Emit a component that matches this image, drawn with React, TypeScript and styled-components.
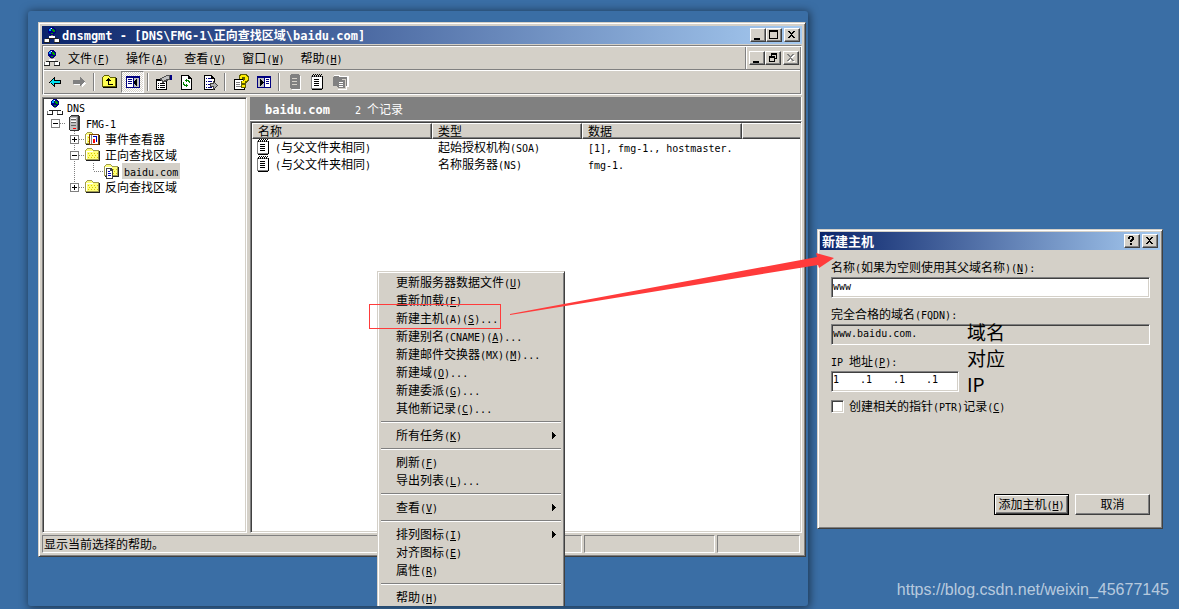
import React from "react";
import styled, { createGlobalStyle, css } from "styled-components";

const face = "#d4d0c8";
const shade = "#808080";
const dark = "#404040";
const desktop = "#3a6ea5";
const red = "#ff3b3b";

const Global = createGlobalStyle`
  * { box-sizing: border-box; }
  body {
    margin: 0;
    background: ${desktop};
    color: #000;
    font: 12px/16px "Noto Sans CJK SC", sans-serif;
  }
  button, input { font: inherit; color: inherit; margin: 0; padding: 0; border-radius: 0; }
`;

/* ---------- bevels ---------- */

const windowEdge = css`
  border: 1px solid;
  border-color: ${face} ${dark} ${dark} ${face};
  box-shadow: inset 1px 1px 0 #fff, inset -1px -1px 0 ${shade};
`;
const raised = css`
  border: 1px solid;
  border-color: #fff ${dark} ${dark} #fff;
  box-shadow: inset -1px -1px 0 ${shade};
`;
const sunken = css`
  border: 1px solid;
  border-color: ${shade} #fff #fff ${shade};
  box-shadow: inset 1px 1px 0 ${dark}, inset -1px -1px 0 ${face};
`;
const thinSunken = css`
  border: 1px solid;
  border-color: ${shade} #fff #fff ${shade};
`;

/* ---------- text ---------- */

const Latin = styled.span<{ $bold?: boolean }>`
  font-family: "DejaVu Sans Mono", monospace;
  font-size: ${(p) => (p.$bold ? 12 : 10)}px;
  line-height: 10px;
  white-space: pre;
`;

/** Half-width runs are set in a monospace face; "&" marks the access key. */
function Text({ children, bold }: { children: string; bold?: boolean }) {
  return (
    <>
      {children.split(/([\x20-\x7e]+)/).map((run, i) => {
        if (i % 2 === 0) return run;
        const at = run.indexOf("&");
        return (
          <Latin key={i} $bold={bold}>
            {at < 0 ? run : <>{run.slice(0, at)}<u>{run[at + 1]}</u>{run.slice(at + 2)}</>}
          </Latin>
        );
      })}
    </>
  );
}

/* ---------- icons ---------- */

const Svg = styled.svg`
  display: block;
  flex: none;
`;

type IconProps = { w?: number; h?: number; children: React.ReactNode };
const Icon = ({ w = 16, h = 16, children }: IconProps) => (
  <Svg width={w} height={h} viewBox={`0 0 ${w} ${h}`} shapeRendering="crispEdges" aria-hidden="true">
    {children}
  </Svg>
);

const NetIcon = () => (
  <Icon>
    <path d="M6 0h4v1h1v1h1v4h-1v1h-1v1H6V7H5V6H4V2h1V1h1z" fill="#000080" />
    <path d="M6 1h2v1H7v2H5V2h1z" fill="#00a0ff" />
    <path d="M8 2h2v1h1v2h-2V4H8zM7 6h2v1H7z" fill="#00a000" />
    <path d="M7 1h1v1H7z" fill="#fff" />
    <path d="M7 8h2v1h2v2H5V9h2zM0 12h6v4H0zM10 12h6v4h-6z" fill="#808080" />
    <path d="M5 9h6v2H5zM1 12h4v3H1zM11 12h4v3h-4z" fill="#fff" />
    <path d="M4 11h8v1H4zM2 11h2v1H2zM12 11h2v1h-2zM0 15h6v1H0zM10 15h6v1h-6zM5 12h1v3H5zM15 12h1v3h-1z" fill="#202020" />
  </Icon>
);

const ServerIcon = ({ off }: { off?: boolean }) => (
  <Icon>
    {off && <path d="M4 1h9v1h1v14H5v-1H4z" fill="#fff" />}
    <path d={off ? "M4 0h8v1h1v14H4v-1H3V1h1z" : "M5 0h8v1h1v14h-1v1H4v-1H3V2h1V1h1z"} fill={off ? shade : "#303030"} />
    {!off && <path d="M4 2h7v13H4z" fill="#c0c0c0" />}
    {!off && <path d="M5 1h7v1H5zM11 2h1v13h-1z" fill="#808080" />}
    <path d="M5 4h5v1H5zM5 7h5v1H5zM5 10h5v1H5z" fill={off ? face : "#606060"} />
    {!off && <path d="M5 3h5v1H5zM5 6h5v1H5z" fill="#fff" />}
    {!off && <path d="M7 13h3v1H7z" fill="#f00" />}
  </Icon>
);

const Folder = () => (
  <>
    <path d="M0 3h1V2h1V1h5v1h1v1h6v10H0z" fill="#a09c50" />
    <path d="M1 3h1V2h5v1h1v1h5v8H1z" fill="#ffff7a" />
    <path d="M1 4h7v1H1zM1 4h1v8H1z" fill="#fff" />
    <path d="M3 6h1v1H3zM6 6h1v1H6zM9 6h1v1H9zM4 8h1v1H4zM7 8h1v1H7zM10 8h1v1h-1zM3 10h1v1H3zM6 10h1v1H6zM9 10h1v1H9zM12 6h1v1h-1zM12 10h1v1h-1z" fill="#d8c800" />
    <path d="M14 4h1v10H1v-1h13z" fill="#202020" />
  </>
);
const FolderIcon = () => <Icon><Folder /></Icon>;

const EventIcon = () => (
  <Icon>
    <Folder />
    <path d="M4 3h10v11H4z" fill="#804000" />
    <path d="M5 4h8v9H5z" fill="#fff" />
    <path d="M6 4h1v9H6z" fill="#808080" />
    <path d="M8 5h4v1H8zM11 5h1v6h-1z" fill="#0000c0" />
    <path d="M8 8h2v4H8z" fill="#f00" />
  </Icon>
);

const ZoneIcon = () => (
  <Icon>
    <Folder />
    <path d="M2 5h5l2 2v9H2z" fill="#404040" />
    <path d="M3 6h3v2h2v7H3z" fill="#fff" />
    <path d="M4 8h2v1H4zM4 10h3v1H4zM4 12h3v1H4z" fill="#0000c0" />
  </Icon>
);

const ZonesOffIcon = () => (
  <Icon>
    <path d="M1 1h6v1h9v11h-2v3H5z" fill="#fff" />
    <path d="M0 3h1V2h5v1h8v9H0z" fill={shade} />
    <path d="M4 5h9v10H4z" fill={face} />
    <path d="M4 5h5v1h3v8H5v-1H4z" fill={shade} />
    <path d="M6 8h4v1H6zM6 10h4v1H6zM6 12h4v1H6z" fill="#fff" />
  </Icon>
);

const RecordIcon = () => (
  <Icon>
    <path d="M1 2h11v13H1z" fill="#808080" />
    <path d="M2 3h10v11H2z" fill="#fff" />
    <path d="M12 2h1v13h-1v1H2v-1h10z" fill="#000" />
    <path d="M2 1h1v2H2zM4 1h1v2H4zM6 1h1v2H6zM8 1h1v2H8zM10 1h1v2h-1zM3 0h1v1H3zM5 0h1v1H5zM7 0h1v1H7zM9 0h1v1H9zM11 0h1v1h-1zM4 5h5v1H4zM4 7h5v1H4zM4 9h5v1H4zM4 11h5v1H4z" fill="#000" />
  </Icon>
);

const ArrowIcon = ({ back }: { back?: boolean }) =>
  back ? (
    <Icon>
      <path d="M1 8h1V7h1V6h1V5h1V4h1V3h1v3h6v4H7v3H6v-1H5v-1H4v-1H3V9H1z" fill="#000" />
      <path d="M2 8h1V7h1V6h1V5h1v2h6v2H6v2H5v-1H4V9H2z" fill="#00e0f0" />
    </Icon>
  ) : (
    <Icon>
      <path d="M3 8h11v1h1v1h-1v1h-1v1h-1v1h-1v-2H3z" fill="#fff" />
      <path d="M2 6h7V3h1v1h1v1h1v1h1v1h1v1h-1v1h-1v1h-1v1h-1v1H9v-2H2z" fill={shade} />
    </Icon>
  );

const UpIcon = () => (
  <Icon>
    <path d="M0 3h1V2h1V1h5v1h1v1h6v10H0z" fill="#606000" />
    <path d="M1 3h1V2h5v1h1v1h5v8H1z" fill="#ffff50" />
    <path d="M6 4h1v1h1v1h1v1H7v3h4v1H6V7H4V6h1V5h1z" fill="#000" />
    <path d="M14 4h1v10H1v-1h13z" fill="#000" />
  </Icon>
);

const PaneIcon = ({ flip }: { flip?: boolean }) => (
  <Icon>
    <path d="M1 2h14v12H1z" fill="#000080" />
    <path d="M2 4h6v9H2zM9 4h5v9H9z" fill="#fff" />
    <path d={flip ? "M10 5h3v1h-3zM10 7h3v1h-3zM10 9h3v1h-3z" : "M3 5h4v1H3zM3 7h4v1H3zM3 9h4v1H3z"} fill="#000080" />
    <path d={flip ? "M2 4h6v9H2z" : "M9 4h5v9H9z"} fill="#c0c0c0" />
    <path d={flip ? "M4 5h1v1h1v1h1v1h1v1H7v1H6v1H5v1H4z" : "M12 5v7h-1v-1h-1v-1H9V7h1V6h1V5z"} fill="#000" />
  </Icon>
);

const PropsIcon = () => (
  <Icon w={18}>
    <path d="M1 5h11v11H1z" fill="#000" />
    <path d="M2 7h9v8H2z" fill="#fff" />
    <path d="M3 9h1v1H3zM5 9h5v1H5zM3 11h1v1H3zM5 11h5v1H5zM3 13h1v1H3zM5 13h5v1H5z" fill="#000" />
    <path d="M5 4h2V3h2V2h2V1h5v5h-3v1h-2v1H9v1H7V7H6V6H5z" fill="#505050" />
    <path d="M7 4h2V3h2V2h3v3h-3v1H9v1H8V6H7z" fill="#c0c0c0" />
    <path d="M15 1h2v5h-2z" fill="#000080" />
  </Icon>
);

const Sheet = () => (
  <>
    <path d="M2 1h8v1h1v1h1v1h1v12H2z" fill="#000" />
    <path d="M3 2h6v3h3v10H3z" fill="#fff" />
  </>
);

const RefreshIcon = () => (
  <Icon>
    <Sheet />
    <path d="M7 5h1v1h2v1h1v2h-1V8H9V7H8v1H7V7H6V6h1zM4 8h1v2h1v1h1v-1h1v1h1v1H8v1H7v-1H5v-1H4z" fill="#008000" />
  </Icon>
);

const ExportIcon = () => (
  <Icon>
    <Sheet />
    <path d="M4 4h1v1H4zM6 4h3v1H6zM4 7h1v1H4zM6 7h4v1H6zM4 10h1v1H4zM6 10h3v1H6zM4 13h1v1H4zM6 13h4v1H6z" fill="#000080" />
    <path d="M8 9h3V7h1v1h1v1h1v1h1v1h1v1h-1v1h-1v1h-1v1h-1v1h-1v-3H8z" fill="#404040" />
    <path d="M9 10h3V9h1v1h1v1h1v1h-1v1h-1v1h-1v-2H9z" fill="#b0b0b0" />
  </Icon>
);

const HelpIcon = () => (
  <Icon>
    <path d="M1 5h11v11H1z" fill="#000" />
    <path d="M2 6h9v9H2z" fill="#fff" />
    <path d="M3 8h4v1H3zM3 10h4v1H3zM3 12h6v1H3z" fill="#808080" />
    <path d="M7 0h7v1h1v1h1v5h-1v1h-1v1h-1v5H8V7h2V5H6V1h1z" fill="#606000" />
    <path d="M8 1h5v1h1v1h1v3h-1v1h-2v2H9V7h2V6h1V3H9v2H7V2h1zM9 11h3v2H9z" fill="#ffee00" />
  </Icon>
);

const glyphs: Record<string, string> = {
  min: "M3 9h6v2H3z",
  max: "M2 1h9v9H2zM3 3v6h7V3z",
  restore: "M5 1h6v6H9V6h1V3H6v1H5zM3 4h6v6H3zM4 6v3h4V6z",
  close: "M3 2h2v1h1v1h1V3h1V2h2v1H9v1H8v1H7v1h1v1h1v1h1v1H8V8H7V7H6v1H5v1H3V8h1V7h1V6h1V5H5V4H4V3H3z",
  help: "M4 1h4v1h1v3H8v1H7v1H5V5h1V4h1V2H5v2H3V2h1zM5 8h2v2H5z",
};
const Glyph = ({ name, off }: { name: string; off?: boolean }) => (
  <Icon w={13} h={12}>
    {off && <path d={glyphs[name]} fill="#fff" fillRule="evenodd" transform="translate(1 1)" />}
    <path d={glyphs[name]} fill={off ? shade : "#000"} fillRule="evenodd" />
  </Icon>
);

/* ---------- desktop ---------- */

const Desktop = styled.main`
  position: relative;
  display: grid;
  grid-template-columns: minmax(0, 1fr) 346px;
  column-gap: 9px;
  min-height: 100vh;
  padding: 11px 16px 3px 28px;
  overflow: hidden;
`;

const Screen = styled.div`
  position: relative;
  display: flex;
  padding: 11px 2px 49px 10px;
  border-radius: 3px;
  overflow: hidden;
`;

const ScreenFrame = styled.div`
  display: grid;
  border-radius: 3px;
  box-shadow: 1px 1px 8px 1px rgba(0, 0, 0, 0.5);
`;

const ConsoleWindow = styled.section`
  ${windowEdge}
  flex: 1;
  min-width: 0;
  display: flex;
  flex-direction: column;
  padding: 3px;
  background: ${face};
`;

const TitleBar = styled.header`
  flex: none;
  display: flex;
  align-items: center;
  height: 18px;
  padding: 0 2px;
  background: linear-gradient(90deg, #0a246a, #a6caf0);
  color: #fff;
`;

const Title = styled.h1<{ $inset?: boolean }>`
  flex: 1;
  margin: 0;
  padding: 0 0 1px ${(p) => (p.$inset ? 2 : 0)}px;
  font-size: ${(p) => (p.$inset ? 12 : 13)}px;
  line-height: 16px;
  font-weight: 700;
  white-space: nowrap;
`;

const CaptionGroup = styled.div`
  display: flex;
`;

const CaptionButton = styled.button<{ $apart?: boolean }>`
  ${raised}
  width: 16px;
  height: 14px;
  margin-left: ${(p) => (p.$apart ? 2 : 0)}px;
  background: ${face};
`;

function Caption({ first, offClose }: { first: string[]; offClose?: boolean }) {
  return (
    <CaptionGroup>
      {first.map((name) => (
        <CaptionButton key={name} type="button" aria-label={name}><Glyph name={name} /></CaptionButton>
      ))}
      <CaptionButton $apart type="button" aria-label="close" disabled={offClose}>
        <Glyph name="close" off={offClose} />
      </CaptionButton>
    </CaptionGroup>
  );
}

const Rebar = styled.div`
  flex: none;
  margin-top: 1px;
  padding: 1px;
  border: 1px solid;
  border-color: ${shade} #fff #fff ${shade};
  box-shadow: inset 1px 1px 0 #fff, inset -1px -1px 0 ${shade};
`;

const MenuBar = styled.nav`
  display: flex;
  align-items: center;
  height: 22px;
`;

const MenuTitle = styled.button`
  height: 20px;
  padding: 0 8px;
  border: 0;
  background: none;
  line-height: 18px;
  white-space: nowrap;
`;

const MdiControls = styled.div`
  display: flex;
  align-items: center;
  height: 22px;
  margin-left: auto;
  padding: 0 1px 0 3px;
  border-left: 1px solid ${shade};
  box-shadow: inset 1px 0 0 #fff;
`;

const ToolBar = styled.div`
  display: flex;
  height: 24px;
  border-top: 1px solid ${shade};
  box-shadow: inset 0 1px 0 #fff;
  padding-top: 1px;
`;

const Tool = styled.button<{ $down?: boolean }>`
  display: grid;
  place-items: center;
  width: 23px;
  height: 22px;
  border: 0;
  background: none;
  ${(p) => p.$down && css`
    ${thinSunken}
    background: repeating-conic-gradient(#fff 0 25%, ${face} 0 50%) 0 0 / 2px 2px;
  `}
`;

const ToolGap = styled.span`
  width: 2px;
  height: 18px;
  margin: 2px 3px;
  border-left: 1px solid ${shade};
  border-right: 1px solid #fff;
`;

const Panes = styled.div`
  flex: 1;
  display: grid;
  grid-template-columns: 205px minmax(0, 1fr);
  column-gap: 3px;
  margin: 2px 0;
`;

const TreePane = styled.div`
  ${sunken}
  padding: 1px 3px;
  background: #fff;
`;

const TreeRow = styled.div`
  display: flex;
  align-items: center;
  height: 16px;
`;

const Guide = styled.span<{ $line?: boolean; $end?: boolean; $link?: boolean }>`
  position: relative;
  flex: none;
  display: grid;
  place-items: center;
  width: 19px;
  height: 16px;
  ${(p) => p.$line && css`
    background: repeating-linear-gradient(${shade} 0 1px, transparent 1px 2px) 9px 0 / 1px ${p.$end ? 8 : 16}px no-repeat;
  `}
  ${(p) => p.$link && css`
    &::after {
      content: "";
      position: absolute;
      left: 10px;
      right: 0;
      top: 8px;
      height: 1px;
      background: repeating-linear-gradient(90deg, ${shade} 0 1px, transparent 1px 2px);
    }
  `}
`;

const TreeIcon = styled.span`
  flex: none;
  margin: 0 2px 0 1px;
`;

const TreeLabel = styled.span<{ $selected?: boolean }>`
  padding: 0 2px;
  line-height: 16px;
  white-space: nowrap;
  background: ${(p) => (p.$selected ? face : "transparent")};
`;

const ExpanderBox = styled(Svg)`
  z-index: 1;
`;

const Expander = ({ open }: { open: boolean }) => (
  <ExpanderBox width="9" height="9" viewBox="0 0 9 9" shapeRendering="crispEdges" aria-hidden="true">
    <path d="M0 0h9v9H0z" fill={shade} />
    <path d="M1 1h7v7H1z" fill="#fff" />
    <path d={open ? "M2 4h5v1H2z" : "M2 4h5v1H2zM4 2h1v5H4z"} fill="#000" />
  </ExpanderBox>
);

const ListColumn = styled.div`
  display: flex;
  flex-direction: column;
  min-width: 0;
`;

const Banner = styled.div`
  flex: none;
  display: flex;
  align-items: center;
  gap: 25px;
  height: 24px;
  padding-left: 15px;
  border: solid #fff;
  border-width: 0 1px 1px 0;
  background: ${shade};
  color: #fff;
`;

const ListPane = styled.div`
  ${sunken}
  flex: 1;
  padding: 1px;
  background: #fff;
`;

const RecordTable = styled.table`
  width: 100%;
  table-layout: fixed;
  border-collapse: separate;
  border-spacing: 0;
  th {
    ${raised}
    height: 16px;
    padding: 0 5px;
    background: ${face};
    font-weight: 400;
    line-height: 14px;
    text-align: left;
  }
  th:last-child { border-right: 0; box-shadow: inset 0 -1px 0 ${shade}; }
  td {
    height: 17px;
    padding: 0 6px 1px;
    line-height: 16px;
    vertical-align: top;
    white-space: nowrap;
  }
`;

const NameCell = styled.span`
  display: flex;
  align-items: center;
  gap: 3px;
  margin-left: -2px;
`;

const StatusBar = styled.footer`
  flex: none;
  display: grid;
  grid-template-columns: minmax(0, 1fr) 131px 83px;
  gap: 2px;
  height: 18px;
  padding-right: 2px;
`;

const StatusCell = styled.div`
  ${thinSunken}
  padding-left: 1px;
  line-height: 16px;
  white-space: nowrap;
`;

/* ---------- context menu ---------- */

const ContextMenu = styled.div`
  ${windowEdge}
  position: absolute;
  left: 349px;
  top: 260px;
  width: 188px;
  padding: 2px;
  background: ${face};
`;

const MenuItem = styled.button`
  display: flex;
  align-items: center;
  justify-content: space-between;
  width: 100%;
  height: 18px;
  padding: 0 6px 2px 16px;
  border: 0;
  background: none;
  line-height: 16px;
  text-align: left;
  white-space: nowrap;
`;

const Divider = styled.hr`
  height: 2px;
  margin: 3px 1px 4px;
  border: 0;
  border-top: 1px solid ${shade};
  border-bottom: 1px solid #fff;
`;

const Highlight = styled.div`
  position: absolute;
  left: 341px;
  top: 293px;
  width: 132px;
  height: 25px;
  border: 1px solid ${red};
`;

const menuItems: (string | null)[] = [
  "更新服务器数据文件(&U)",
  "重新加载(&E)",
  "新建主机(A)(&S)...",
  "新建别名(CNAME)(&A)...",
  "新建邮件交换器(MX)(&M)...",
  "新建域(&O)...",
  "新建委派(&G)...",
  "其他新记录(&C)...",
  null,
  "所有任务(&K)>",
  null,
  "刷新(&F)",
  "导出列表(&L)...",
  null,
  "查看(&V)>",
  null,
  "排列图标(&I)>",
  "对齐图标(&E)",
  "属性(&R)",
  null,
  "帮助(&H)",
];

/* ---------- dialog ---------- */

const Dialog = styled.section`
  ${windowEdge}
  position: relative;
  align-self: start;
  display: flex;
  flex-direction: column;
  min-height: 300px;
  margin-top: 218px;
  padding: 2px;
  background: ${face};
`;

const Form = styled.form`
  flex: 1;
  display: flex;
  flex-direction: column;
  gap: 8px;
  padding: 9px 10px 11px 11px;
`;

const Field = styled.div`
  display: flex;
  flex-direction: column;
  gap: 2px;
`;

const TextBox = styled.input`
  ${sunken}
  width: 100%;
  height: 21px;
  padding: 0 1px 2px;
  background: #fff;
  font: 10px "DejaVu Sans Mono", monospace;
  &:read-only { background: ${face}; }
`;

const AddressBox = styled.div`
  ${sunken}
  display: flex;
  width: 128px;
  height: 21px;
  padding: 0 1px 3px;
  background: #fff;
  font: 10px/16px "DejaVu Sans Mono", monospace;
`;

const Octet = styled.input`
  width: 27px;
  height: 16px;
  border: 0;
  background: none;
  outline: 0;
`;

const Dot = styled.span`
  width: 6px;
`;

const CheckRow = styled.div`
  display: flex;
  gap: 5px;
  line-height: 12px;
`;

const CheckBox = styled.input`
  ${sunken}
  appearance: none;
  width: 13px;
  height: 13px;
  background: #fff;
`;

const Actions = styled.div`
  display: flex;
  justify-content: flex-end;
  gap: 6px;
  margin-top: auto;
`;

const PushButton = styled.button<{ $default?: boolean }>`
  ${raised}
  width: 75px;
  height: 21px;
  padding-bottom: 2px;
  background: ${face};
  line-height: 16px;
  white-space: nowrap;
  ${(p) => p.$default && css`
    border-color: #000;
    box-shadow: inset 1px 1px 0 #fff, inset -1px -1px 0 ${dark}, inset -2px -2px 0 ${shade};
  `}
`;

const Note = styled.p`
  position: absolute;
  left: 149px;
  top: 89px;
  margin: 0;
  font-size: 19px;
  line-height: 26px;
`;

const Pointer = styled.svg`
  position: absolute;
  left: 509px;
  top: 252px;
  pointer-events: none;
`;

const Watermark = styled.a`
  position: absolute;
  right: 10px;
  bottom: 9px;
  color: rgba(255, 255, 255, 0.65);
  font: 16px/20px "Liberation Sans", sans-serif;
  text-decoration: none;
`;

export default function App() {
  return (
    <Desktop>
      <Global />
      <ScreenFrame>
        <Screen>
          <ConsoleWindow>
            <TitleBar>
              <NetIcon />
              <Title $inset><Text bold>{"dnsmgmt - [DNS\\FMG-1\\正向查找区域\\baidu.com]"}</Text></Title>
              <Caption first={["min", "max"]} />
            </TitleBar>
            <Rebar>
              <MenuBar>
                <NetIcon />
                {["文件(&F)", "操作(&A)", "查看(&V)", "窗口(&W)", "帮助(&H)"].map((m) => (
                  <MenuTitle key={m} type="button"><Text>{m}</Text></MenuTitle>
                ))}
                <MdiControls><Caption first={["min", "restore"]} offClose /></MdiControls>
              </MenuBar>
              <ToolBar>
                <Tool type="button" aria-label="后退"><ArrowIcon back /></Tool>
                <Tool type="button" aria-label="前进"><ArrowIcon /></Tool>
                <ToolGap />
                <Tool type="button" aria-label="上一级"><UpIcon /></Tool>
                <Tool type="button" aria-label="控制台树" $down><PaneIcon /></Tool>
                <ToolGap />
                <Tool type="button" aria-label="属性"><PropsIcon /></Tool>
                <Tool type="button" aria-label="刷新"><RefreshIcon /></Tool>
                <Tool type="button" aria-label="导出列表"><ExportIcon /></Tool>
                <ToolGap />
                <Tool type="button" aria-label="帮助"><HelpIcon /></Tool>
                <Tool type="button" aria-label="操作窗格"><PaneIcon flip /></Tool>
                <ToolGap />
                <Tool type="button" aria-label="新建服务器"><ServerIcon off /></Tool>
                <Tool type="button" aria-label="新建记录"><RecordIcon /></Tool>
                <Tool type="button" aria-label="新建区域"><ZonesOffIcon /></Tool>
              </ToolBar>
            </Rebar>
            <Panes>
              <TreePane>
                <TreeRow><TreeIcon><NetIcon /></TreeIcon><TreeLabel><Text>DNS</Text></TreeLabel></TreeRow>
                <TreeRow>
                  <Guide $link><Expander open /></Guide>
                  <TreeIcon><ServerIcon /></TreeIcon><TreeLabel><Text>FMG-1</Text></TreeLabel>
                </TreeRow>
                <TreeRow>
                  <Guide /><Guide $line $link><Expander open={false} /></Guide>
                  <TreeIcon><EventIcon /></TreeIcon><TreeLabel>事件查看器</TreeLabel>
                </TreeRow>
                <TreeRow>
                  <Guide /><Guide $line $link><Expander open /></Guide>
                  <TreeIcon><FolderIcon /></TreeIcon><TreeLabel>正向查找区域</TreeLabel>
                </TreeRow>
                <TreeRow>
                  <Guide /><Guide $line /><Guide $line $end $link />
                  <TreeIcon><ZoneIcon /></TreeIcon><TreeLabel $selected><Text>baidu.com</Text></TreeLabel>
                </TreeRow>
                <TreeRow>
                  <Guide /><Guide $line $end $link><Expander open={false} /></Guide>
                  <TreeIcon><FolderIcon /></TreeIcon><TreeLabel>反向查找区域</TreeLabel>
                </TreeRow>
              </TreePane>
              <ListColumn>
                <Banner>
                  <strong><Text bold>baidu.com</Text></strong>
                  <span><Text>2 个记录</Text></span>
                </Banner>
                <ListPane>
                  <RecordTable>
                    <colgroup>
                      <col width="180" /><col width="150" /><col width="160" /><col />
                    </colgroup>
                    <thead>
                      <tr><th>名称</th><th>类型</th><th>数据</th><th aria-label="其他" /></tr>
                    </thead>
                    <tbody>
                      <tr>
                        <td><NameCell><RecordIcon /><span><Text>(与父文件夹相同)</Text></span></NameCell></td>
                        <td><Text>起始授权机构(SOA)</Text></td>
                        <td><Text>[1], fmg-1., hostmaster.</Text></td>
                        <td />
                      </tr>
                      <tr>
                        <td><NameCell><RecordIcon /><span><Text>(与父文件夹相同)</Text></span></NameCell></td>
                        <td><Text>名称服务器(NS)</Text></td>
                        <td><Text>fmg-1.</Text></td>
                        <td />
                      </tr>
                    </tbody>
                  </RecordTable>
                </ListPane>
              </ListColumn>
            </Panes>
            <StatusBar>
              <StatusCell>显示当前选择的帮助。</StatusCell>
              <StatusCell />
              <StatusCell />
            </StatusBar>
          </ConsoleWindow>

          <ContextMenu>
            {menuItems.map((item, i) =>
              item === null ? (
                <Divider key={i} />
              ) : (
                <MenuItem key={i} type="button">
                  <span><Text>{item.replace(">", "")}</Text></span>
                  {item.endsWith(">") && (
                    <Icon w={4} h={9}><path d="M0 1h1v1h1v1h1v1h1v1H3v1H2v1H1v1H0z" fill="#000" /></Icon>
                  )}
                </MenuItem>
              )
            )}
          </ContextMenu>
          <Highlight />
        </Screen>
      </ScreenFrame>

      <Dialog>
        <TitleBar>
          <Title as="h2">新建主机</Title>
          <Caption first={["help"]} />
        </TitleBar>
        <Form onSubmit={(e) => e.preventDefault()}>
          <Field>
            <label htmlFor="host"><Text>名称(如果为空则使用其父域名称)(&N):</Text></label>
            <TextBox id="host" defaultValue="www" />
          </Field>
          <Field>
            <label htmlFor="fqdn"><Text>完全合格的域名(FQDN):</Text></label>
            <TextBox id="fqdn" readOnly value="www.baidu.com." />
          </Field>
          <Field>
            <label htmlFor="ip0"><Text>IP 地址(&P):</Text></label>
            <AddressBox>
              {[0, 1, 2, 3].map((n) => (
                <React.Fragment key={n}>
                  {n > 0 && <Dot>.</Dot>}
                  <Octet id={`ip${n}`} aria-label={`IP 地址 ${n + 1}`} defaultValue="1" />
                </React.Fragment>
              ))}
            </AddressBox>
          </Field>
          <CheckRow>
            <CheckBox id="ptr" type="checkbox" />
            <label htmlFor="ptr"><Text>创建相关的指针(PTR)记录(&C)</Text></label>
          </CheckRow>
          <Actions>
            <PushButton $default type="submit"><Text>添加主机(&H)</Text></PushButton>
            <PushButton type="button">取消</PushButton>
          </Actions>
        </Form>
        <Note>域名<br />对应<br />IP</Note>
      </Dialog>

      <Pointer width="326" height="64" viewBox="0 0 326 64" aria-hidden="true">
        <path d="M1 62L308 5L307 1L325 6L310 16L309 13L1 63Z" fill={red} />
      </Pointer>
      <Watermark href="https://blog.csdn.net/weixin_45677145">https://blog.csdn.net/weixin_45677145</Watermark>
    </Desktop>
  );
}
